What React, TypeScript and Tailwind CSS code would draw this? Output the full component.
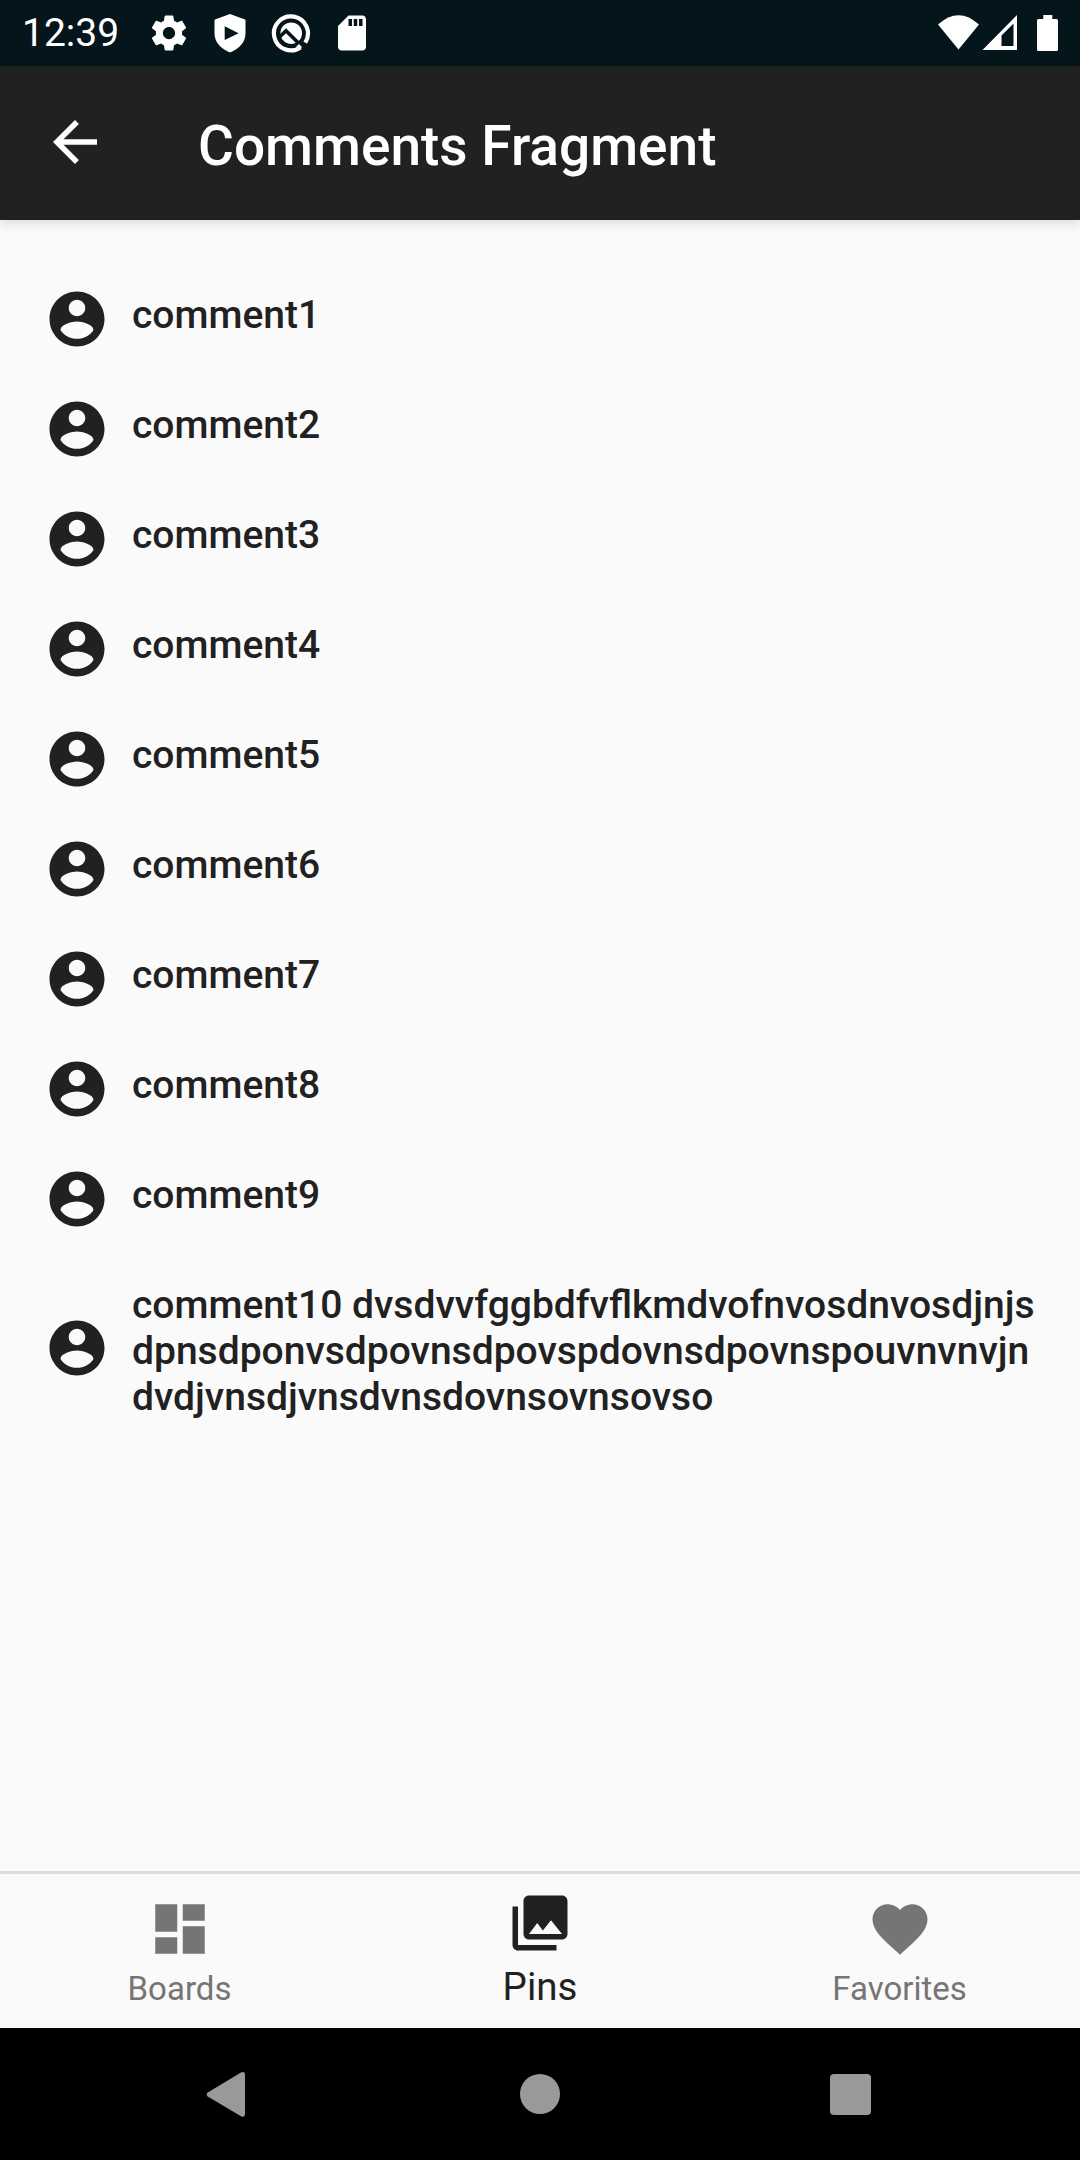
import React from "react";

const comments: string[][] = [
  ["comment1"],
  ["comment2"],
  ["comment3"],
  ["comment4"],
  ["comment5"],
  ["comment6"],
  ["comment7"],
  ["comment8"],
  ["comment9"],
  [
    "comment10 dvsdvvfggbdfvflkmdvofnvosdnvosdjnjs",
    "dpnsdponvsdpovnsdpovspdovnsdpovnspouvnvnvjn",
    "dvdjvnsdjvnsdvnsdovnsovnsovso",
  ],
];

function Icon({ d, className }: { d: string; className: string }) {
  return (
    <svg viewBox="0 0 24 24" fill="currentColor" className={className}>
      <path d={d} />
    </svg>
  );
}

const ACCOUNT =
  "M12 2C6.48 2 2 6.48 2 12s4.48 10 10 10 10-4.48 10-10S17.52 2 12 2zm0 3c1.66 0 3 1.34 3 3s-1.34 3-3 3-3-1.34-3-3 1.34-3 3-3zm0 14.2c-2.5 0-4.71-1.28-6-3.22.03-1.99 4-3.08 6-3.08 1.99 0 5.97 1.09 6 3.08-1.29 1.94-3.5 3.22-6 3.22z";
const BACK = "M20 11H7.83l5.59-5.59L12 4l-8 8 8 8 1.41-1.41L7.83 13H20v-2z";
const DASHBOARD = "M3 13h8V3H3v10zm0 8h8v-6H3v6zm10 0h8V11h-8v10zm0-18v6h8V3h-8z";
const PHOTOS =
  "M22 16V4c0-1.1-.9-2-2-2H8c-1.1 0-2 .9-2 2v12c0 1.1.9 2 2 2h12c1.1 0 2-.9 2-2zm-11-4l2.03 2.71L16 11l4 5H8l3-4zM2 6v14c0 1.1.9 2 2 2h14v-2H4V6H2z";
const HEART =
  "M12 21.35l-1.45-1.32C5.4 15.36 2 12.28 2 8.5 2 5.42 4.42 3 7.5 3c1.74 0 3.41.81 4.5 2.09C13.09 3.81 14.76 3 16.5 3 19.58 3 22 5.42 22 8.5c0 3.78-3.4 6.86-8.55 11.54L12 21.35z";
const GEAR =
  "M19.43 12.98c.04-.32.07-.64.07-.98s-.03-.66-.07-.98l2.11-1.65c.19-.15.24-.42.12-.64l-2-3.46c-.12-.22-.39-.3-.61-.22l-2.49 1c-.52-.4-1.08-.73-1.69-.98l-.38-2.65C14.46 2.18 14.25 2 14 2h-4c-.25 0-.46.18-.49.42l-.38 2.65c-.61.25-1.17.59-1.69.98l-2.49-1c-.23-.09-.49 0-.61.22l-2 3.46c-.13.22-.07.49.12.64l2.11 1.65c-.04.32-.07.65-.07.98s.03.66.07.98l-2.11 1.65c-.19.15-.24.42-.12.64l2 3.46c.12.22.39.3.61.22l2.49-1c.52.4 1.08.73 1.69.98l.38 2.65c.03.24.24.42.49.42h4c.25 0 .46-.18.49-.42l.38-2.65c.61-.25 1.17-.59 1.69-.98l2.49 1c.23.09.49 0 .61-.22l2-3.46c.12-.22.07-.49-.12-.64l-2.11-1.65zM12 15.5c-1.93 0-3.5-1.57-3.5-3.5s1.57-3.5 3.5-3.5 3.5 1.57 3.5 3.5-1.57 3.5-3.5 3.5z";
const SD_CARD =
  "M18 2h-8L4.02 8 4 20c0 1.1.9 2 2 2h12c1.1 0 2-.9 2-2V4c0-1.1-.9-2-2-2zm-6 6h-2V4h2v4zm3 0h-2V4h2v4zm3 0h-2V4h2v4z";

function StatusBar() {
  return (
    <header className="flex h-[66px] items-center bg-[#04151b] pl-[22px] pr-[22px] text-white">
      <span className="w-[125.5px] text-[39px] leading-[66px]">12:39</span>
      <div className="flex items-center gap-[19px]">
        <Icon d={GEAR} className="size-[42px]" />
        <svg viewBox="0 0 42 42" className="size-[42px]">
          <path
            d="M21 2 36 7.6Q36.5 7.8 36.5 8.5V21Q36.5 34 21 40.4 5.5 34 5.5 21V8.500Q5.5 7.8 6 7.600Z"
            fill="white"
          />
          <path d="M15.7 14.3V28L29.6 21.200Z" fill="#04151b" />
        </svg>
        <svg viewBox="0 0 42 42" className="size-[42px]" fill="none">
          <path d="M30.8 35.2A17 17 0 1 1 35.2 30.6" stroke="white" strokeWidth="4.2" />
          <circle cx="21.2" cy="21.2" r="10.800" fill="white" />
          <path d="M8.500 26 16 18.800 34.500 37" stroke="#04151b" strokeWidth="3.600" />
          <path d="M27.500 33.500 30.500 36.500" stroke="white" strokeWidth="4" />
        </svg>
        <Icon d={SD_CARD} className="size-[42px]" />
      </div>
      <svg viewBox="0 0 122 66" className="ml-auto h-[66px] w-[122px]" fill="white">
        <path d="M2 24.5Q22.500 6 43 24.5L22.500 49.5Z" />
        <path fillRule="evenodd" d="M46.500 50H81V15ZM65.500 35.500 77.500 23.500V46H65.500Z" />
        <path d="M107.3 15h9v4h4.200q1.500 0 1.500 1.500v29q0 1.500-1.500 1.500h-18q-1.500 0-1.500-1.500v-29q0-1.500 1.500-1.500h4.800z" />
      </svg>
    </header>
  );
}

function Tab({ icon, label, active }: { icon: string; label: string; active?: boolean }) {
  return active ? (
    <button className="flex flex-1 flex-col items-center pt-[16px] text-[#212121]">
      <Icon d={icon} className="size-[66px]" />
      <span className="mt-[8px] text-[38.5px] leading-[46px]">{label}</span>
    </button>
  ) : (
    <button className="flex flex-1 flex-col items-center pt-[22px] text-[#757575]">
      <Icon d={icon} className="size-[66px]" />
      <span className="mr-px mt-[7px] text-[33px] leading-[39px]">{label}</span>
    </button>
  );
}

export default function App() {
  return (
    <div className="flex h-[2160px] w-[1080px] flex-col overflow-hidden bg-[#fafafa] font-['Roboto',sans-serif]">
      <StatusBar />
      <div className="flex h-[154px] shrink-0 items-center bg-[#212121] pl-[42px] text-white shadow-[0_3px_12px_rgba(0,0,0,0.13)]">
        <Icon d={BACK} className="mb-[3px] size-[66px]" />
        <h1 className="ml-[90px] mt-[5px] text-[55px] font-medium leading-[64px]">Comments Fragment</h1>
      </div>
      <ul className="flex-1 pt-[44px]">
        {comments.map((lines) => (
          <li key={lines[0]} className="flex min-h-[110px] items-center pl-[44px] text-[#212121]">
            <Icon d={ACCOUNT} className="size-[66px] shrink-0" />
            <p className="ml-[22px] self-start pb-[22px] pt-[28px] text-[39px] font-medium leading-[46px]">
              {lines.map((line) => (
                <span key={line} className="block whitespace-nowrap">
                  {line}
                </span>
              ))}
            </p>
          </li>
        ))}
      </ul>
      <nav className="flex h-[157px] border-t-[3px] border-[#dcdcdc]">
        <Tab icon={DASHBOARD} label="Boards" />
        <Tab icon={PHOTOS} label="Pins" active />
        <Tab icon={HEART} label="Favorites" />
      </nav>
      <footer className="flex h-[132px] items-center bg-black pl-[205px] text-[#999999]">
        <svg viewBox="0 0 42 48" className="h-[48px] w-[42px]" fill="currentColor">
          <path d="M2.300 22.800 36 2.600Q40 0.800 40 5V44Q40 48 36 46.200L2.300 26.200Q0.800 24.500 2.300 22.800Z" />
        </svg>
        <div className="ml-[273px] size-[40px] rounded-full bg-[#999999]" />
        <div className="ml-[270px] mt-px size-[41px] rounded-[4px] bg-[#999999]" />
      </footer>
    </div>
  );
}
